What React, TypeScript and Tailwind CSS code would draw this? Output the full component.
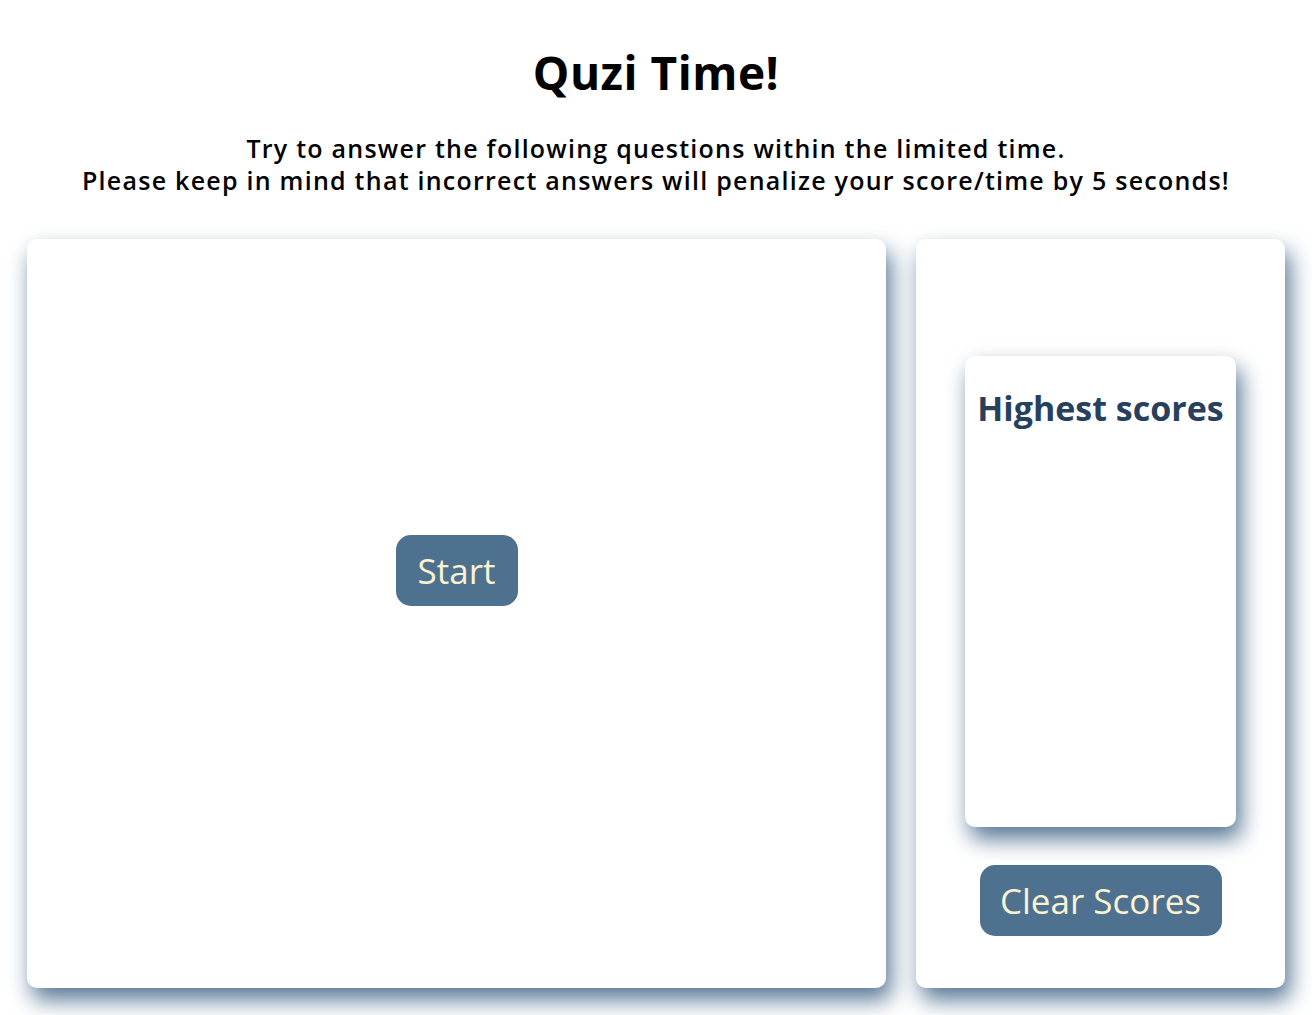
import React from "react";

export default function App() {
  const font = { fontFamily: '"Open Sans", "Noto Sans", sans-serif' };
  return (
    <div className="min-h-[1015px] w-full bg-white text-black" style={font}>
      <div className="flex flex-col items-center">
        <h1 className="mt-[42px] text-[46px] font-bold leading-[60px] tracking-[0.5px]">Quzi Time!</h1>
        <div className="mt-[30px] text-center text-[25px] font-semibold leading-[32px] tracking-[1.25px]">
          <p>Try to answer the following questions within the limited time.</p>
          <p>Please keep in mind that incorrect answers will penalize your score/time by 5 seconds!</p>
        </div>
      </div>
      <div className="mt-[43px] flex gap-[30px] px-[27px]">
        <div className="flex h-[749px] w-[859px] flex-col items-center rounded-[10px] bg-white shadow-[5px_12px_22px_rgba(79,113,144,0.95)]">
          <button className="mt-[296px] h-[71px] w-[122px] rounded-[15px] bg-[#4f7190] text-[35px] leading-none text-[#faf3d2]">
            Start
          </button>
        </div>
        <div className="flex h-[749px] flex-1 flex-col items-center rounded-[10px] bg-white shadow-[5px_12px_22px_rgba(79,113,144,0.95)]">
          <div className="mt-[117px] flex h-[471px] w-[271px] flex-col items-center rounded-[10px] bg-white shadow-[5px_12px_22px_rgba(79,113,144,0.95)]">
            <h2 className="mt-[30px] text-[34px] font-bold leading-[44px] text-[#26405e]">Highest scores</h2>
          </div>
          <button className="mt-[38px] h-[71px] w-[242px] rounded-[15px] bg-[#4f7190] text-[35px] leading-none text-[#faf3d2]">
            Clear Scores
          </button>
        </div>
      </div>
    </div>
  );
}
